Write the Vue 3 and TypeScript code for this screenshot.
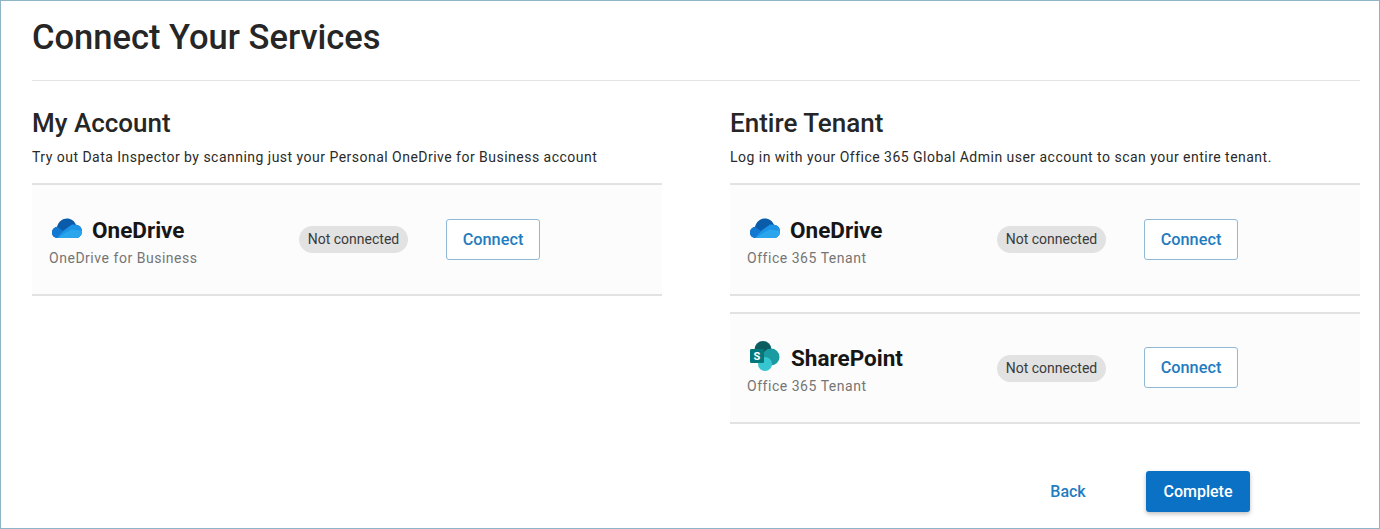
<template>
  <div class="page">
    <h1 class="title">Connect Your Services</h1>
    <div class="columns">
      <section v-for="col in columns" :key="col.title" class="column">
        <h2 class="col-title">{{ col.title }}</h2>
        <p class="col-desc">{{ col.desc }}</p>
        <div class="rows">
          <div v-for="row in col.rows" :key="row.name + row.sub" class="row">
            <div class="service">
              <div class="service-name">
                <svg v-if="row.icon === 'onedrive'" class="icon icon-od" viewBox="0 0 32 22" width="32" height="22">
                  <defs>
                    <clipPath id="cloud">
                      <path d="M7 21C3 21 1 18.500 1 15.500 1 12.500 3 10.300 6 9.800 7.500 4.500 11.500 1.500 16 1.500c4 0 7.500 2.300 9 6.300 3.500.2 6 3.200 6 6.700S28.500 21 25 21Z" />
                    </clipPath>
                  </defs>
                  <g clip-path="url(#cloud)">
                    <rect width="32" height="22" fill="#0a5cab" />
                    <path d="M12 14 21 7.500 32 8v14H3Z" fill="#1c93e4" />
                    <path d="M0 8 5.500 9.500 12 14 5 22H0Z" fill="#1279d2" />
                    <path d="M6 21.500 14 16 21 12.500 32 14v8H6Z" fill="#2ba6ec" />
                  </g>
                </svg>
                <svg v-else class="icon icon-sp" viewBox="0 0 30 30" width="30" height="30">
                  <circle cx="13" cy="8.500" r="8.500" fill="#0b5c5f" />
                  <circle cx="21" cy="16" r="8.500" fill="#1a9ba1" />
                  <circle cx="15" cy="23" r="7" fill="#37c6d0" />
                  <rect x="0" y="8" width="14" height="14" rx="1.300" fill="#03787c" />
                  <text x="7" y="19" class="icon-s">S</text>
                </svg>
                <span>{{ row.name }}</span>
              </div>
              <div class="service-sub">{{ row.sub }}</div>
            </div>
            <span class="pill">Not connected</span>
            <button class="connect" type="button">Connect</button>
          </div>
        </div>
      </section>
    </div>
    <div class="actions">
      <button class="back" type="button">Back</button>
      <button class="complete" type="button">Complete</button>
    </div>
  </div>
</template>

<script setup lang="ts">
interface ServiceRow {
  icon: "onedrive" | "sharepoint";
  name: string;
  sub: string;
}

const columns: { title: string; desc: string; rows: ServiceRow[] }[] = [
  {
    title: "My Account",
    desc: "Try out Data Inspector by scanning just your Personal OneDrive for Business account",
    rows: [{ icon: "onedrive", name: "OneDrive", sub: "OneDrive for Business" }],
  },
  {
    title: "Entire Tenant",
    desc: "Log in with your Office 365 Global Admin user account to scan your entire tenant.",
    rows: [
      { icon: "onedrive", name: "OneDrive", sub: "Office 365 Tenant" },
      { icon: "sharepoint", name: "SharePoint", sub: "Office 365 Tenant" },
    ],
  },
];
</script>

<style scoped>
.page {
  position: relative;
  box-sizing: border-box;
  height: 529px;
  border: 1px solid #8fb4c6;
  padding: 0 19px 0 31px;
  background: #fff;
  font-family: Roboto, "Liberation Sans", sans-serif;
  color: #1f1f1f;
  overflow: hidden;
}

.title {
  margin: 0;
  height: 80px;
  box-sizing: border-box;
  padding-top: 16px;
  font-size: 34.500px;
  line-height: 40px;
  font-weight: 500;
  color: #262626;
  border-bottom: 1px solid #e4e4e4;
}

.columns {
  display: grid;
  grid-template-columns: 630px 630px;
  gap: 68px;
}

.col-title {
  margin: 26px 0 0;
  font-size: 26px;
  line-height: 32px;
  font-weight: 500;
  color: #262626;
}

.col-desc {
  margin: 8px 0 0;
  font-size: 14px;
  line-height: 20px;
  letter-spacing: 0.48px;
  height: 36px;
  color: #2a2a2a;
}

.rows {
  display: flex;
  flex-direction: column;
  gap: 16px;
}

.row {
  box-sizing: border-box;
  height: 113px;
  display: flex;
  align-items: center;
  padding-left: 17px;
  background: #fcfcfc;
  border-top: 2px solid #e2e2e2;
  border-bottom: 2px solid #e2e2e2;
}

.row + .row {
  height: 112px;
}

.service {
  width: 250px;
  margin-top: 4px;
}

.row + .row .service {
  margin-top: 2px;
}

.service-name {
  display: flex;
  align-items: center;
  height: 30px;
  font-size: 22.500px;
  font-weight: 700;
  color: #161616;
}

.icon {
  flex: none;
  margin-bottom: 4px;
}

.icon-od {
  margin-left: 2px;
  margin-right: 9px;
}

.icon-sp {
  margin-left: 3px;
  margin-right: 11px;
}

.icon-s {
  font-size: 11px;
  font-weight: 700;
  fill: #fff;
  text-anchor: middle;
}

.service-sub {
  margin-top: 3px;
  font-size: 14px;
  line-height: 20px;
  letter-spacing: 0.53px;
  color: #757575;
}

.pill {
  box-sizing: border-box;
  width: 109px;
  height: 27px;
  line-height: 27px;
  text-align: center;
  border-radius: 14px;
  background: #e2e2e2;
  color: #3a3a3a;
  font-size: 14px;
}

.connect {
  box-sizing: border-box;
  margin-left: 38px;
  width: 94px;
  height: 41px;
  border: 1px solid #8fb9d6;
  border-radius: 3px;
  background: #fff;
  color: #1f7cc0;
  font-family: inherit;
  font-size: 16.300px;
  font-weight: 500;
}

.row + .row .connect {
  margin-bottom: 2px;
}

.actions {
  position: absolute;
  top: 470px;
  left: 1018px;
  display: flex;
  align-items: center;
}

.back {
  width: 98px;
  height: 41px;
  border: 0;
  background: none;
  color: #1f7cc0;
  font-family: inherit;
  font-size: 16px;
  font-weight: 500;
}

.complete {
  margin-left: 29px;
  width: 104px;
  height: 41px;
  border: 0;
  border-radius: 3px;
  background: #0a71c4;
  color: #fff;
  font-family: inherit;
  font-size: 16px;
  font-weight: 500;
  box-shadow: 0 2px 4px rgba(0, 0, 0, 0.25);
}
</style>
